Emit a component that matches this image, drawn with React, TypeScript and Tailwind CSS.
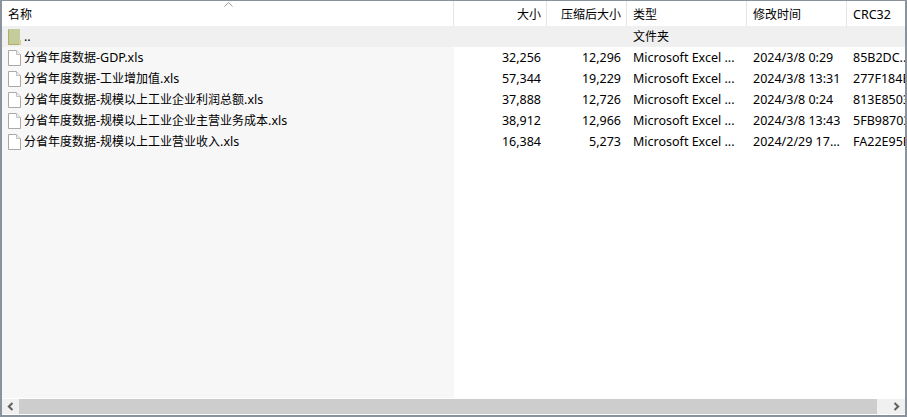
const cols = [
  { w: 'w-[93px]', head: '大小', right: true, vals: ['', '32,256', '57,344', '37,888', '38,912', '16,384'] },
  { w: 'w-[80px]', head: '压缩后大小', right: true, vals: ['', '12,296', '19,229', '12,726', '12,966', '5,273'] },
  { w: 'w-[120px]', head: '类型', right: false, vals: ['文件夹', 'Microsoft Excel ...', 'Microsoft Excel ...', 'Microsoft Excel ...', 'Microsoft Excel ...', 'Microsoft Excel ...'] },
  { w: 'w-[100px]', head: '修改时间', right: false, vals: ['', '2024/3/8 0:29', '2024/3/8 13:31', '2024/3/8 0:24', '2024/3/8 13:43', '2024/2/29 17...'] },
  { w: 'flex-1', head: 'CRC32', right: false, vals: ['', '85B2DC...', '277F184E', '813E8503', '5FB98703', 'FA22E95E'] },
];
const names = ['..', '分省年度数据-GDP.xls', '分省年度数据-工业增加值.xls', '分省年度数据-规模以上工业企业利润总额.xls', '分省年度数据-规模以上工业企业主营业务成本.xls', '分省年度数据-规模以上工业营业收入.xls'];

function T({ s }: { s: string }) {
  const parts = s.split(/([\u4e00-\u9fff]+)/).filter(Boolean);
  return (
    <span>
      {parts.map((p, i) => (/[\u4e00-\u9fff]/.test(p) ? <span key={i} className="text-[12px]">{p}</span> : <span key={i}>{p}</span>))}
    </span>
  );
}

function FileIcon() {
  return (
    <svg width="13" height="16" viewBox="0 0 13 16" className="shrink-0">
      <path d="M0.5 0.5H8.5L12.5 4.5V15.5H0.5Z" fill="#ffffff" stroke="#a8a8a8" />
      <path d="M8.5 0.5V4.5H12.5" fill="#f0f0f0" stroke="#c0c0c0" />
    </svg>
  );
}
function FolderIcon() {
  return (
    <svg width="13" height="16" viewBox="0 0 13 16" className="shrink-0">
      <rect x="0" y="0" width="12" height="16" fill="#c3cd9c" />
      <path d="M0.5 0.5V15.5H12.5" fill="none" stroke="#b5a868" />
      <path d="M11 11H13V16H11Z" fill="#d9cf94" />
    </svg>
  );
}

export default function App() {
  return (
    <div className="w-[907px] h-[417px] overflow-hidden bg-white flex flex-col border-x-2 border-t border-b-[2px] border-[#8a929c] text-[12.5px] leading-[21px] text-black font-['Noto_Sans','Noto_Sans_CJK_SC',sans-serif]">
      <div className="flex-1 flex min-h-0">
        <div className="w-[452px] shrink-0 relative flex flex-col bg-[#f7f7f7]">
          <svg width="9" height="5" viewBox="0 0 9 5" className="absolute left-[222px] top-[1px]">
            <path d="M0.5 4.5L4.5 0.5L8.5 4.5" fill="none" stroke="#9a9a9a" />
          </svg>
          <div className="h-[25px] shrink-0 bg-white border-r border-[#e5e5e5] pl-[6px] pt-px flex items-center"><T s="名称" /></div>
          {names.map((n, i) => (
            <div key={n} className={`h-[21px] shrink-0 flex items-center gap-[3px] pl-[6px] whitespace-nowrap ${i === 0 ? 'bg-[#f0f0f0]' : ''}`}>
              {i === 0 ? <FolderIcon /> : <FileIcon />}
              <T s={n} />
            </div>
          ))}
        </div>
        {cols.map((c) => (
          <div key={c.head} className={`${c.w} ${c.w === 'flex-1' ? '' : 'shrink-0'} min-w-0 flex flex-col overflow-hidden`}>
            <div className={`h-[25px] shrink-0 flex items-center pt-px whitespace-nowrap ${c.w === 'flex-1' ? '' : 'border-r border-[#e5e5e5]'} ${c.right ? 'justify-end pr-[5px]' : 'pl-[6px]'}`}><T s={c.head} /></div>
            {c.vals.map((v, i) => (
              <div key={i} className={`h-[21px] shrink-0 flex items-center whitespace-nowrap ${i === 0 ? 'bg-[#f0f0f0]' : ''} ${c.right ? 'justify-end pr-[6px]' : 'pl-[6px]'}`}><T s={v} /></div>
            ))}
          </div>
        ))}
      </div>
      <div className="h-[15px] shrink-0 flex bg-[#f0f0f0] mt-px mb-px">
        <div className="w-[17px] shrink-0 flex items-center justify-center">
          <svg width="7" height="9" viewBox="0 0 7 9"><path d="M5.5 1L1.8 4.5L5.5 8" fill="none" stroke="#606060" strokeWidth="2" /></svg>
        </div>
        <div className="flex-1 bg-[#cdcdcd]" />
        <div className="w-[28px] shrink-0 flex items-center justify-end pr-[5px]">
          <svg width="7" height="9" viewBox="0 0 7 9"><path d="M1.5 1L5.2 4.5L1.5 8" fill="none" stroke="#606060" strokeWidth="2" /></svg>
        </div>
      </div>
    </div>
  );
}
